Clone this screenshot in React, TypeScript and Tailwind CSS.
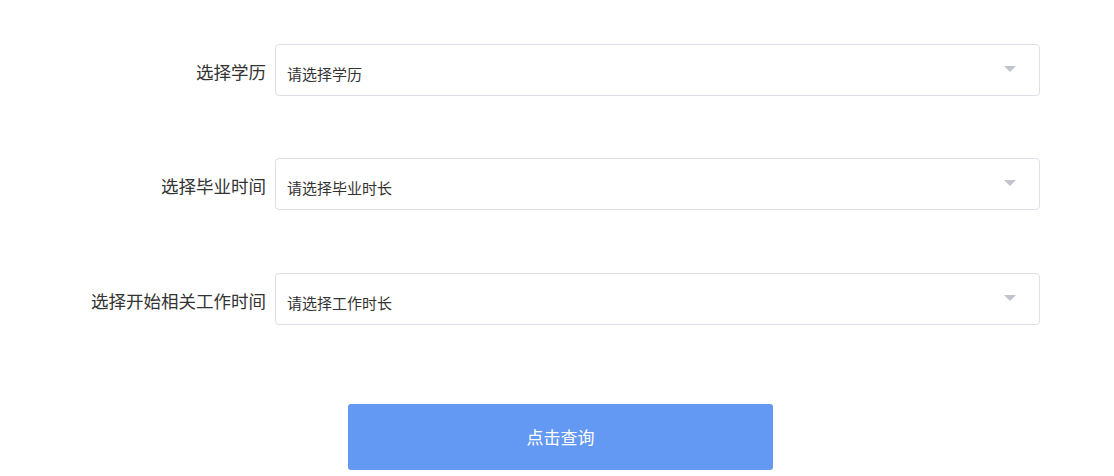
import { useState } from "react";

type Field = {
  label: string;
  placeholder: string;
  mt: string;
};

const fields: Field[] = [
  { label: "选择学历", placeholder: "请选择学历", mt: "mt-[44px]" },
  { label: "选择毕业时间", placeholder: "请选择毕业时长", mt: "mt-[62px]" },
  { label: "选择开始相关工作时间", placeholder: "请选择工作时长", mt: "mt-[63px]" },
];

export default function App() {
  const [values] = useState<string[]>(["", "", ""]);

  return (
    <main
      className="w-[1114px] h-[476px] bg-white overflow-hidden text-[#333] flow-root"
      style={{ fontFamily: '"Microsoft YaHei", "Noto Sans CJK SC", sans-serif' }}
    >
      {fields.map((f, i) => (
        <div key={f.label} className={`${f.mt} flex items-center h-[52px]`}>
          <label className="w-[266px] text-right text-[17.5px] leading-none pt-[3px]">
            {f.label}
          </label>
          <div className="ml-[9px] w-[765px] h-[52px] border border-[#dcdfe6] rounded-[4px] flex items-center justify-between pl-[11px] pr-[23px]">
            <span className="text-[15px] leading-none pt-[6px]">
              {values[i] || f.placeholder}
            </span>
            <span className="w-0 h-0 border-l-[6px] border-r-[6px] border-t-[6px] border-l-transparent border-r-transparent border-t-[#c0c4cc] mb-[2px]" />
          </div>
        </div>
      ))}
      <div className="mt-[79px] flex pl-[348px]">
        <button className="w-[425px] h-[66px] bg-[#6398f3] rounded-[3px] text-white text-[17px]">
          点击查询
        </button>
      </div>
    </main>
  );
}
